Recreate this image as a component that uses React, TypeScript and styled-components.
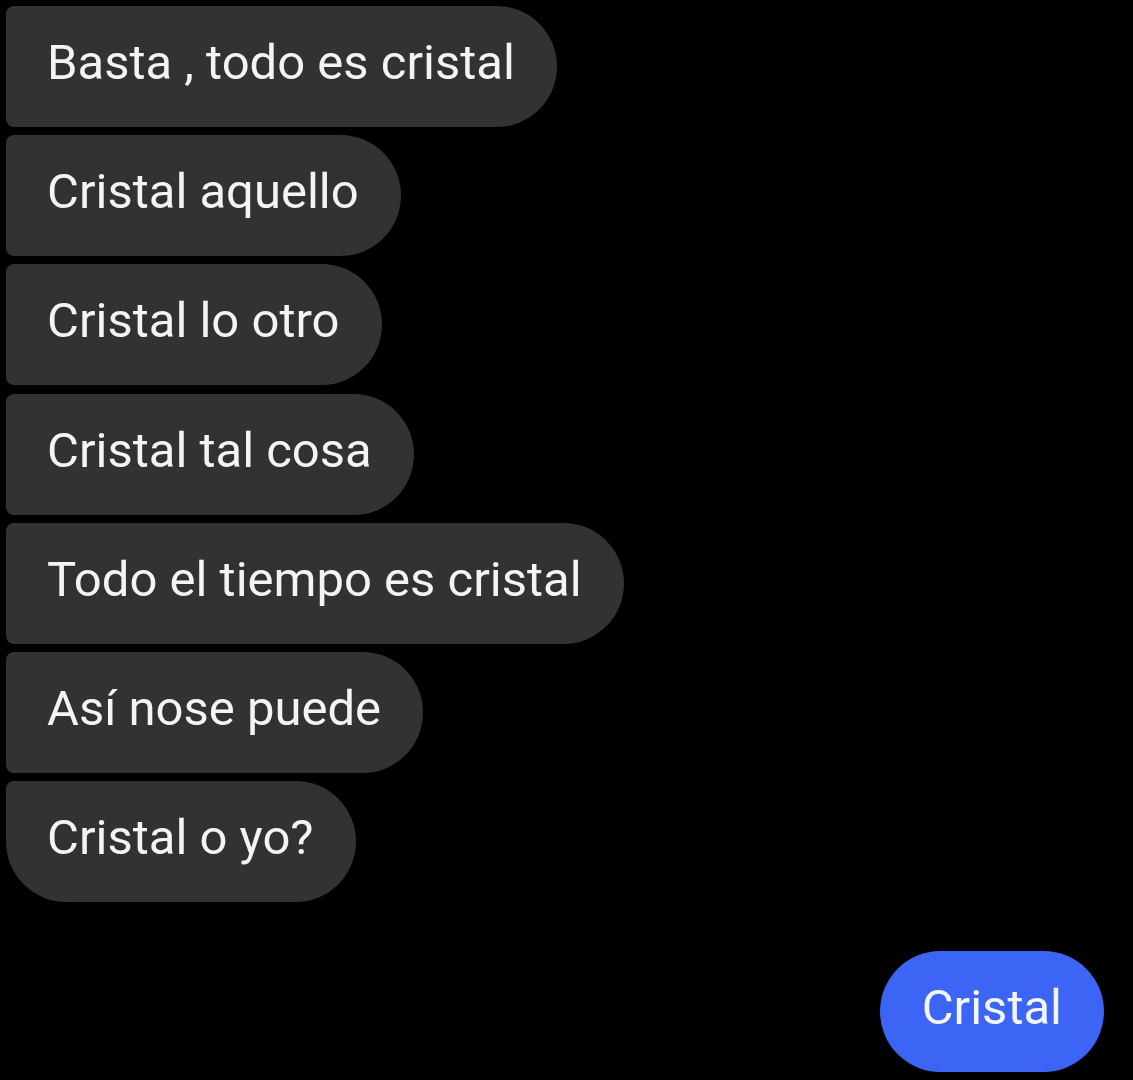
import React from "react";
import styled, { createGlobalStyle } from "styled-components";

const Global = createGlobalStyle`
  html, body { margin: 0; padding: 0; background: #000; }
  body { font-family: Roboto, "Noto Sans", "Liberation Sans", sans-serif; }
`;

const Page = styled.div`
  width: 1133px;
  height: 1080px;
  background: #000;
  box-sizing: border-box;
  padding: 6px 29px 0 6px;
  display: flex;
  flex-direction: column;
  overflow: hidden;
`;

const Group = styled.div`
  display: flex;
  flex-direction: column;
  align-items: flex-start;
  gap: 8.2px;
`;

const Bubble = styled.div<{ $last?: boolean }>`
  height: 121px;
  box-sizing: border-box;
  padding: 0 42px 8px 41px;
  display: flex;
  align-items: center;
  background: #323232;
  color: #f4f4f4;
  font-size: 49px;
  border-radius: 8px 61px 61px ${(p) => (p.$last ? "61px" : "8px")};
  white-space: nowrap;
`;

const Outgoing = styled.div`
  align-self: flex-end;
  margin-top: 49px;
  height: 121px;
  box-sizing: border-box;
  padding: 0 42px 8px;
  display: flex;
  align-items: center;
  background: #3c64f5;
  color: #f4f6ff;
  font-size: 49px;
  border-radius: 61px;
`;

const messages = [
  "Basta , todo es cristal",
  "Cristal aquello",
  "Cristal lo otro",
  "Cristal tal cosa",
  "Todo el tiempo es cristal",
  "Así nose puede",
  "Cristal o yo?",
];

export default function App() {
  return (
    <>
      <Global />
      <Page>
        <Group>
          {messages.map((m, i) => (
            <Bubble key={i} $last={i === messages.length - 1}>
              {m}
            </Bubble>
          ))}
        </Group>
        <Outgoing>Cristal</Outgoing>
      </Page>
    </>
  );
}
